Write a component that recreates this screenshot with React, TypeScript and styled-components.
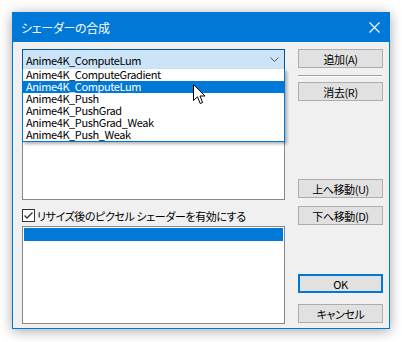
import React from "react";
import styled, { createGlobalStyle } from "styled-components";

const GlobalStyle = createGlobalStyle`
  html, body {
    margin: 0;
    padding: 0;
    background: #fff;
  }
  body {
    font-family: "Noto Sans CJK JP", sans-serif;
    font-size: 11px;
    letter-spacing: -0.4px;
    color: #000;
    font-feature-settings: "palt";
  }
`;

const Page = styled.div`
  position: relative;
  width: 402px;
  height: 342px;
  padding: 12px 0 0 12px;
  box-sizing: border-box;
  overflow: hidden;
`;

const Window = styled.div`
  width: 378px;
  height: 317px;
  box-sizing: border-box;
  border: 1px solid #0078d7;
  background: #f0f0f0;
  box-shadow: 0 2px 12px rgba(0, 0, 0, 0.35);
  display: flex;
  flex-direction: column;
`;

const TitleBar = styled.div`
  height: 29px;
  flex: none;
  background: #0078d7;
  color: #fff;
  display: flex;
  align-items: center;
  padding-left: 8px;
  font-size: 12px;
  letter-spacing: -0.3px;
`;

const Title = styled.span`
  flex: 1;
`;

const Close = styled.svg`
  width: 11px;
  height: 11px;
  margin-right: 9px;
`;

const Body = styled.div`
  flex: 1;
  display: grid;
  grid-template-columns: 263px 85px;
  column-gap: 13px;
  padding: 7px 6px 4px 9px;
`;

const Column = styled.div`
  display: flex;
  flex-direction: column;
`;

const Combo = styled.div`
  position: relative;
  height: 21px;
  box-sizing: border-box;
  border: 1px solid #005499;
  background: #cce4f7;
  display: flex;
  align-items: center;
  padding-left: 3px;
`;

const ComboText = styled.span`
  flex: 1;
`;

const Chevron = styled.svg`
  width: 9px;
  height: 5px;
  margin-right: 5px;
`;

const DropList = styled.ul`
  position: absolute;
  top: 100%;
  left: -1px;
  width: 263px;
  box-sizing: border-box;
  margin: 0;
  padding: 0;
  list-style: none;
  background: #fff;
  border: 1px solid #0078d7;
  border-top: none;
  box-shadow: 2px 2px 3px rgba(0, 0, 0, 0.3);
  z-index: 2;
`;

const DropItem = styled.li<{ $selected?: boolean }>`
  height: 12px;
  line-height: 11px;
  padding-left: 3px;
  white-space: nowrap;
  background: ${(p) => (p.$selected ? "#0078d7" : "transparent")};
  color: ${(p) => (p.$selected ? "#fff" : "#000")};
`;

const ListBox = styled.div<{ $h: number; $mt: number }>`
  height: ${(p) => p.$h}px;
  margin-top: ${(p) => p.$mt}px;
  box-sizing: border-box;
  border: 1px solid #828790;
  background: #fff;
  padding: 1px;
`;

const ListRow = styled.div`
  height: 13px;
  background: #0078d7;
`;

const CheckRow = styled.label`
  height: 13px;
  margin-top: 9px;
  display: flex;
  align-items: center;
  gap: 2px;
  white-space: nowrap;
`;

const CheckBox = styled.span`
  width: 13px;
  height: 13px;
  box-sizing: border-box;
  border: 1px solid #333;
  background: #fff;
  display: flex;
  align-items: center;
  justify-content: center;
`;

const Button = styled.div<{ $mt?: number; $default?: boolean }>`
  height: 19px;
  margin-top: ${(p) => p.$mt ?? 0}px;
  box-sizing: border-box;
  background: #e1e1e1;
  border: ${(p) => (p.$default ? "2px solid #0078d7" : "1px solid #adadad")};
  display: flex;
  align-items: center;
  justify-content: center;
  white-space: nowrap;
`;

const Separator = styled.div`
  width: 84px;
  height: 1px;
  margin-top: 7px;
  background: #a0a0a0;
  border-bottom: 1px solid #fff;
`;

const Cursor = styled.svg`
  position: absolute;
  left: 193px;
  top: 84px;
  width: 13px;
  height: 21px;
  z-index: 3;
`;

const items = [
  "Anime4K_ComputeGradient",
  "Anime4K_ComputeLum",
  "Anime4K_Push",
  "Anime4K_PushGrad",
  "Anime4K_PushGrad_Weak",
  "Anime4K_Push_Weak",
];

const App: React.FC = () => (
  <Page>
    <GlobalStyle />
    <Window>
      <TitleBar>
        <Title>シェーダーの合成</Title>
        <Close viewBox="0 0 11 11">
          <path d="M0.5 0.5 L10.5 10.5 M10.5 0.5 L0.5 10.5" stroke="#fff" strokeWidth="1.1" fill="none" />
        </Close>
      </TitleBar>
      <Body>
        <Column>
          <Combo>
            <ComboText>Anime4K_ComputeLum</ComboText>
            <Chevron viewBox="0 0 9 5">
              <path d="M0.5 0.5 L4.5 4.5 L8.5 0.5" stroke="#555" strokeWidth="1" fill="none" />
            </Chevron>
            <DropList>
              {items.map((it) => (
                <DropItem key={it} $selected={it === "Anime4K_ComputeLum"}>
                  {it}
                </DropItem>
              ))}
            </DropList>
          </Combo>
          <ListBox $h={124} $mt={6} />
          <CheckRow>
            <CheckBox>
              <svg width="11" height="11" viewBox="0 0 11 11">
                <path d="M1.5 5.5 L4 8 L9.5 2.5" stroke="#333" strokeWidth="1.3" fill="none" />
              </svg>
            </CheckBox>
            リサイズ後のピクセル シェーダーを有効にする
          </CheckRow>
          <ListBox $h={98} $mt={4}>
            <ListRow />
          </ListBox>
        </Column>
        <Column>
          <Button>追加(A)</Button>
          <Separator />
          <Button $mt={5}>消去(R)</Button>
          <Button $mt={78}>上へ移動(U)</Button>
          <Button $mt={8}>下へ移動(D)</Button>
          <Button $mt={49} $default>
            OK
          </Button>
          <Button $mt={11}>キャンセル</Button>
        </Column>
      </Body>
    </Window>
    <Cursor viewBox="0 0 13 21">
      <path
        d="M0.5 0.5 V16.5 L4.5 12.8 L7.2 19.5 L9.6 18.5 L7 12 H12 Z"
        fill="#fff"
        stroke="#000"
        strokeWidth="1"
        strokeLinejoin="miter"
      />
    </Cursor>
  </Page>
);

export default App;
